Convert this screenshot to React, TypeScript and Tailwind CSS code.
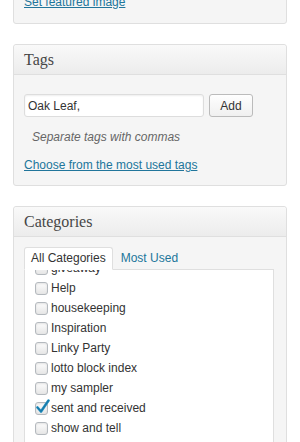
import { useState } from 'react';

const sans = { fontFamily: '"Liberation Sans", Arial, sans-serif' };
const serif = { fontFamily: '"Liberation Serif", Georgia, serif' };

const categories = [
  { name: 'giveaway', checked: false },
  { name: 'Help', checked: false },
  { name: 'housekeeping', checked: false },
  { name: 'Inspiration', checked: false },
  { name: 'Linky Party', checked: false },
  { name: 'lotto block index', checked: false },
  { name: 'my sampler', checked: false },
  { name: 'sent and received', checked: true },
  { name: 'show and tell', checked: false },
  { name: 'tutorials', checked: false },
];

function Panel({ title, children, className = '' }: { title?: string; children: React.ReactNode; className?: string }) {
  return (
    <div className={`mx-[13px] rounded-[3px] border border-[#dfdfdf] bg-[#f5f5f5] shadow-[0_1px_0_#fff_inset] ${className}`}>
      {title && (
        <div className="h-[30px] border-b border-[#dfdfdf] bg-gradient-to-b from-[#f9f9f9] to-[#ececec] pl-[10px] rounded-t-[3px]">
          <h3 className="text-[16px] leading-[30px] text-[#464646]" style={serif}>{title}</h3>
        </div>
      )}
      {children}
    </div>
  );
}

function Check({ checked }: { checked: boolean }) {
  return (
    <span className="relative inline-block h-[13px] w-[13px] shrink-0 rounded-[3px] border border-[#b4b9be] bg-gradient-to-b from-[#fdfdfd] to-[#e6e6e6] shadow-[inset_0_1px_2px_rgba(0,0,0,0.1)]">
      {checked && (
        <svg viewBox="0 0 16 16" className="absolute left-[-1px] top-[-4px] h-[16px] w-[16px]">
          <path d="M2.5 8.5 L6 12.5 L13.5 1.5" fill="none" stroke="#1e8cbe" strokeWidth="2.6" strokeLinecap="round" strokeLinejoin="round" />
          <path d="M2.5 8.5 L6 12.5 L13.5 1.5" fill="none" stroke="#0f4f7a" strokeWidth="1" strokeLinecap="round" strokeLinejoin="round" opacity="0.4" />
        </svg>
      )}
    </span>
  );
}

export default function App() {
  const [tag, setTag] = useState('Oak Leaf,');
  const [tab, setTab] = useState('all');

  return (
    <div className="h-[442px] w-[300px] overflow-hidden bg-white text-[12px] text-[#333]" style={sans}>
      <div className="flex flex-col gap-5">
        <Panel className="-mt-[20px] pt-[12px] pb-[12px]">
          <a href="#" className="block pl-[10px] leading-[18px] text-[#21759b] underline">Set featured image</a>
        </Panel>

        <Panel title="Tags">
          <div className="pl-[10px] pr-[12px] pt-[19px] pb-[11px]">
            <div className="flex gap-[5px]">
              <input
                value={tag}
                onChange={(e) => setTag(e.target.value)}
                className="h-[23px] w-[180px] rounded-[3px] border border-[#dddddd] bg-white px-[3px] text-[12px] text-[#333] shadow-[inset_0_1px_2px_rgba(0,0,0,0.07)] outline-none"
                style={sans}
              />
              <button className="h-[23px] w-[44px] rounded-[3px] border border-[#bbbbbb] bg-gradient-to-b from-[#fefefe] to-[#f0f0f0] text-[12px] text-[#333]">
                Add
              </button>
            </div>
            <p className="mt-[11px] pl-[8px] leading-[18px] italic text-[#666]">Separate tags with commas</p>
            <a href="#" className="mt-[10px] block leading-[18px] text-[#21759b] underline">Choose from the most used tags</a>
          </div>
        </Panel>

        <Panel title="Categories" className="h-[400px]">
          <div className="pl-[10px] pr-[12px] pt-[10px]">
            <div className="flex items-end">
              <button
                onClick={() => setTab('all')}
                className={`relative -mb-px h-[23px] rounded-t-[3px] px-[6px] leading-[21px] ${tab === 'all' ? 'z-10 border border-b-white border-[#dfdfdf] bg-white text-[#333]' : 'text-[#21759b]'}`}
              >
                All Categories
              </button>
              <button
                onClick={() => setTab('most')}
                className={`relative -mb-px ml-[2px] h-[23px] rounded-t-[3px] px-[6px] leading-[21px] ${tab === 'most' ? 'z-10 border border-b-white border-[#dfdfdf] bg-white text-[#333]' : 'text-[#21759b]'}`}
              >
                Most Used
              </button>
            </div>
            <div className="h-[200px] overflow-hidden border border-[#dfdfdf] bg-white">
              <ul className="-mt-[12px] pl-[10px]">
                {categories.map((c) => (
                  <li key={c.name} className="flex h-[20px] items-center gap-[3px]">
                    <Check checked={c.checked} />
                    <span className="leading-[20px]">{c.name}</span>
                  </li>
                ))}
              </ul>
            </div>
          </div>
        </Panel>
      </div>
    </div>
  );
}
